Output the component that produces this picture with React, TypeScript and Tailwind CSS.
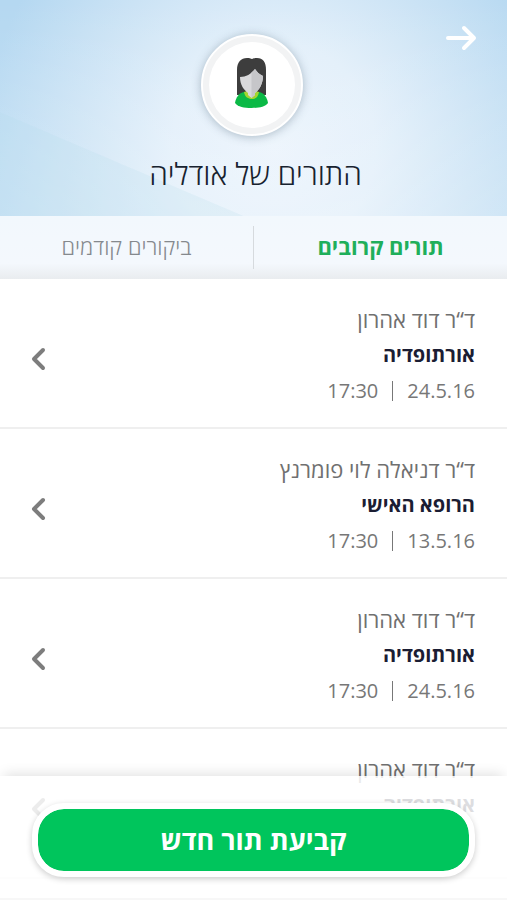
import React, { useState } from 'react';

interface Appointment {
  id: number;
  doctor: string;
  specialty: string;
  date?: string;
  time?: string;
}

const APPOINTMENTS: Appointment[] = [
  { id: 1, doctor: 'ד“ר דוד אהרון', specialty: 'אורתופדיה', date: '24.5.16', time: '17:30' },
  { id: 2, doctor: 'ד“ר דניאלה לוי פומרנץ', specialty: 'הרופא האישי', date: '13.5.16', time: '17:30' },
  { id: 3, doctor: 'ד“ר דוד אהרון', specialty: 'אורתופדיה', date: '24.5.16', time: '17:30' },
  { id: 4, doctor: 'ד“ר דוד אהרון', specialty: 'אורתופדיה' },
];

function Avatar() {
  return (
    <svg viewBox="0 0 36 52" className="h-[52px] w-9" aria-hidden="true">
      {/* Hair */}
      <path d="M3 38V13C3 5 7 1 13 1c2 0 4 .5 5 1 1-.5 3-1 5-1 6 0 9 4 9 12v25z" fill="#3d3d3d" />
      {/* Shirt */}
      <path d="M1 46c1-6 4-10 9-11h15c5 1 8 5 9 11-3 4-9 5-16.500 5S4 50 1 46z" fill="#0bb946" />
      <path d="M10 35c1 5 4 7 8 7s6-2 7-7l-3-1h-9z" fill="#a5d52f" />
      {/* Face */}
      <path d="M6 20c6 0 11-3 15-8 2 3 4 5 8 7 0 8-4 14-8 17v2l-3.500 3-3.500-3v-2C10 33 6 28 6 20z" fill="#d9d9db" />
      <path d="M17.500 15.500C19 14.500 20 13.300 21 12c2 3 4 5 8 7 0 8-4 14-8 17v2l-3.500 3z" fill="#c6c6c9" />
    </svg>
  );
}

function Header() {
  return (
    <header className="relative flex h-[216px] shrink-0 flex-col items-center overflow-hidden bg-[radial-gradient(ellipse_290px_300px_at_54%_68%,#eaf3fc_0%,#e2effa_35%,#cbe3f5_68%,#b5d8f1_100%)] pt-[34px]">
      <div className="absolute inset-0 bg-linear-to-b from-transparent to-white/25" />
      <div className="absolute inset-0 bg-[#b2dced]/20 [clip-path:polygon(0_52%,48%_100%,0_100%)]" />
      <button type="button" aria-label="חזרה" className="absolute top-6 right-[30px] cursor-pointer">
        <svg viewBox="0 0 32 28" className="h-7 w-8" fill="none" stroke="#fff" strokeWidth="4" strokeLinecap="round" strokeLinejoin="round">
          <path d="M3 14h25M19 4l10 10-10 10" />
        </svg>
      </button>
      <div className="relative mr-1 flex size-[102px] items-center justify-center rounded-full border-2 border-white bg-[#f2f3f4] shadow-[0_1px_10px_rgba(90,115,135,0.45)]">
        <div className="flex size-[86px] items-center justify-center rounded-full bg-white pb-1">
          <Avatar />
        </div>
      </div>
      <h1 className="relative mt-4 pl-1 text-[30px] leading-[44px] font-light text-[#17222f]">התורים של אודליה</h1>
    </header>
  );
}

function AppointmentRow({ item }: { item: Appointment }) {
  return (
    <li className="border-b-2 border-[#efefef]">
      <a href="#" className="flex h-[148px] items-start justify-between pt-6 pr-8 pl-[30px]">
        <div>
          <p className="text-[22px] leading-8 text-[#707070]">{item.doctor}</p>
          <p className="mt-1.5 text-[20px] leading-7 font-bold text-[#1b1d33]">{item.specialty}</p>
          {item.date && (
            <p className="mt-2 flex items-center gap-[14px] text-[20px] leading-7 text-[#777]">
              <span>{item.date}</span>
              <span className="h-5 w-px bg-[#777]" />
              <span>{item.time}</span>
            </p>
          )}
        </div>
        <svg viewBox="0 0 16 24" className="mt-11 h-6 w-4" fill="none" stroke="#7d7d7d" strokeWidth="4" strokeLinecap="round" strokeLinejoin="round" aria-hidden="true">
          <path d="M13 3L4 12l9 9" />
        </svg>
      </a>
    </li>
  );
}

export default function App() {
  const [tab, setTab] = useState<'upcoming' | 'past'>('upcoming');

  return (
    <div dir="rtl" className="relative flex h-dvh flex-col overflow-hidden bg-white font-['Open_Sans','Noto_Sans',sans-serif]">
      <Header />

      <nav className="flex h-[63px] shrink-0 items-center bg-linear-to-b from-[#f2f8fd] via-[#f4f8fd] via-75% to-[#e9ecef]">
        <button
          type="button"
          onClick={() => setTab('upcoming')}
          className={`flex-1 cursor-pointer pb-1 text-[22px] leading-8 ${tab === 'upcoming' ? 'font-bold text-[#1faf5b]' : 'font-light text-[#85898d]'}`}
        >
          תורים קרובים
        </button>
        <span className="h-[43px] w-px bg-[#d6dade]" />
        <button
          type="button"
          onClick={() => setTab('past')}
          className={`flex-1 cursor-pointer pb-1 text-[22px] leading-8 ${tab === 'past' ? 'font-bold text-[#1faf5b]' : 'font-light text-[#85898d]'}`}
        >
          ביקורים קודמים
        </button>
      </nav>

      <ul className="min-h-0 flex-1 overflow-y-auto pb-[124px] [scrollbar-width:none]">
        {APPOINTMENTS.map((item) => (
          <AppointmentRow key={item.id} item={item} />
        ))}
      </ul>

      {/* Floating action bar over the list */}
      <footer className="absolute inset-x-0 bottom-0 h-[124px] border-b-2 border-[#f7f7f7] bg-white/85 px-8 pt-[27px] shadow-[0_-6px_12px_-4px_rgba(0,0,0,0.12)]">
        <button
          type="button"
          className="h-[74px] w-full cursor-pointer rounded-[32px] border-[6px] border-white bg-[#00c55c] bg-clip-padding text-[27px] leading-9 font-bold text-white shadow-[0_2px_6px_rgba(0,0,0,0.2)]"
        >
          קביעת תור חדש
        </button>
      </footer>
    </div>
  );
}
